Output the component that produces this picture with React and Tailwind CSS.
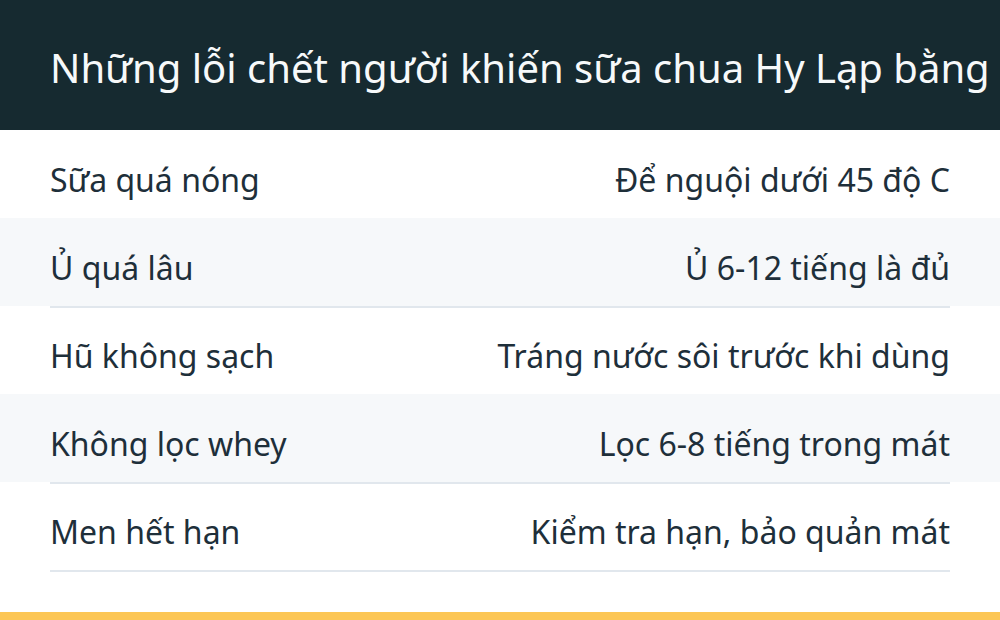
export default function App() {
  const rows = [
    ["Sữa quá nóng", "Để nguội dưới 45 độ C", "bg-white", "h-[88px]"],
    ["Ủ quá lâu", "Ủ 6-12 tiếng là đủ", "bg-[#f6f8fa]", "h-[90px] -mb-[2px] relative z-10 border-b-2 border-[#e1e7ed]"],
    ["Hũ không sạch", "Tráng nước sôi trước khi dùng", "bg-white", "h-[88px]"],
    ["Không lọc whey", "Lọc 6-8 tiếng trong mát", "bg-[#f6f8fa]", "h-[90px] -mb-[2px] relative z-10 border-b-2 border-[#e1e7ed]"],
    ["Men hết hạn", "Kiểm tra hạn, bảo quản mát", "bg-white", "h-[90px] -mb-[2px] relative z-10 border-b-2 border-[#e1e7ed]"],
  ];
  return (
    <div
      className="w-[1000px] h-[620px] bg-white flex flex-col overflow-hidden"
      style={{ fontFamily: '"Noto Sans", "Open Sans", sans-serif' }}
    >
      <div className="h-[130px] shrink-0 bg-[#162a30] overflow-hidden pl-[50px] pr-[8px] pt-[40px]">
        <h1 className="text-[40px] leading-[56px] h-[56px] overflow-hidden text-[#f7f9fa] font-normal">
          Những lỗi chết người khiến sữa chua Hy Lạp bằng nồi chiên không dầu thất bại
        </h1>
      </div>
      <div className="flex flex-col">
        {rows.map(([a, b, bg, box], i) => (
          <div key={i} className={bg}>
            <div
              className={
                "mx-[50px] flex items-start justify-between pt-[26px] text-[32px] leading-normal text-[#1e2f3a] " +
                box
              }
            >
              <span>{a}</span>
              <span>{b}</span>
            </div>
          </div>
        ))}
      </div>
      <div className="flex-1" />
      <div className="h-[8px] bg-[#fcc655] shrink-0" />
    </div>
  );
}
